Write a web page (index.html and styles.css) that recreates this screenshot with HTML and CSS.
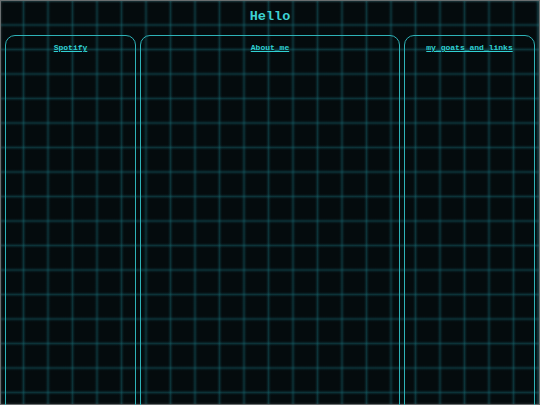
FILE: index.html
```html
<!DOCTYPE html>
<html lang="en">
<head>
<meta charset="utf-8">
<title>Hello</title>
<link rel="stylesheet" href="styles.css">
</head>
<body>
<header class="top">
  <h1 class="title">Hello</h1>
</header>
<main class="columns">
  <section class="panel panel-side">
    <a class="panel-title" href="#">Spotify</a>
  </section>
  <section class="panel panel-main">
    <a class="panel-title" href="#">About_me</a>
  </section>
  <section class="panel panel-side">
    <a class="panel-title" href="#">my_goats_and_links</a>
  </section>
</main>
</body>
</html>
```
FILE: styles.css
```css
html, body {
  margin: 0;
  padding: 0;
}
html {
  background-color: #040b0d;
}
body {
  height: 100vh;
  box-sizing: border-box;
  overflow: hidden;
  font-family: "Liberation Mono", "Courier New", monospace;
  color: #36d0d0;
  background-color: #040b0d;
  background-image:
    linear-gradient(90deg, transparent 9.75px, rgba(20,100,110,0.18) 11px, rgba(25,115,125,0.38) 12.25px, rgba(20,100,110,0.18) 13.5px, transparent 14.75px),
    linear-gradient(180deg, transparent 9.75px, rgba(20,100,110,0.18) 11px, rgba(25,115,125,0.38) 12.25px, rgba(20,100,110,0.18) 13.5px, transparent 14.75px);
  background-size: 24.5px 24.5px;
  background-position: 11.25px 12.75px;
  box-shadow: inset 0 0 0 1px #6a6f70, inset 0 0 3px 1px rgba(150,155,155,0.3);
}
.top {
  padding: 9px 0 10px;
  text-align: center;
}
.title {
  margin: 0;
  font-size: 13.5px;
  line-height: 16px;
  font-weight: bold;
  color: #3dd2d2;
}
.columns {
  display: flex;
  gap: 4px;
  padding: 0 5px;
}
.panel {
  height: 420px;
  border: 1px solid #2eb2b7;
  border-radius: 10px;
  padding-top: 7px;
  text-align: center;
  box-sizing: border-box;
  font-size: 8px;
  line-height: 10px;
}
.panel-side {
  flex: 1 1 0;
}
.panel-main {
  flex: 2 1 0;
}
.panel-title {
  display: inline-block;
  font-size: 8px;
  line-height: 10px;
  font-weight: bold;
  color: #30d0d2;
  text-decoration: underline;
}
```
